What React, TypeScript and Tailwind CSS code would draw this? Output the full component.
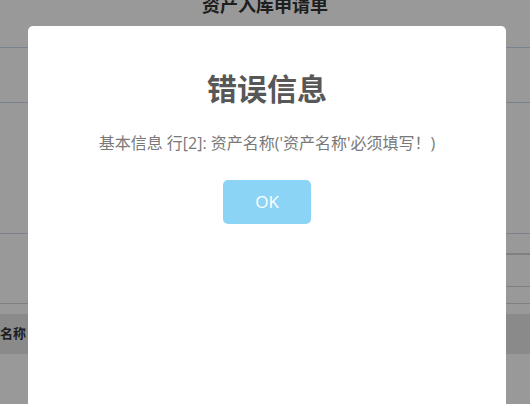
export default function App() {
  return (
    <div className="relative h-[404px] w-[530px] overflow-hidden bg-white font-['Open_Sans','Noto_Sans_CJK_SC',sans-serif]">
      {/* page behind the dialog */}
      <div className="flex h-[48px] flex-col border-b border-[#cbd8f0]">
        <h1 className="-mt-[7px] text-center text-[18px] font-bold leading-[24px] text-[#333]">
          资产入库申请单
        </h1>
      </div>
      <div className="h-[55px] border-b border-[#cbd8f0]" />
      <div className="h-[131px] border-b border-[#d0d9ea]" />
      <div className="grid grid-cols-2 border-b border-[#d5d5d5]">
        <div className="h-[69px]" />
        <div className="flex flex-col">
          <div className="h-[21px] border-b-2 border-[#d5d5d5]" />
          <div className="h-[32px] border-b border-[#d5d5d5]" />
          <div className="h-[15px]" />
        </div>
      </div>
      <div className="mt-[10px] flex h-[40px] items-center bg-[#e6e6e6]">
        <span className="text-[13px] font-bold text-[#333]">名称</span>
      </div>

      {/* overlay */}
      <div className="absolute inset-0 bg-black/40" />

      {/* error dialog */}
      <div className="absolute left-[28px] top-[26px] h-[420px] w-[478px] rounded-[5px] bg-white px-[17px] pt-[17px] text-center">
        <h2 className="mt-[26px] text-[30px] font-semibold leading-[40px] text-[#575757]">
          错误信息
        </h2>
        <p className="mt-[23px] text-[16px] leading-[22px] text-[#797979]">
          基本信息 行[2]: 资产名称('资产名称'必须填写！)
        </p>
        <button className="mt-[26px] h-[44px] w-[88px] rounded-[5px] bg-[#8cd4f5] text-[17px] text-white">
          OK
        </button>
      </div>
    </div>
  );
}
